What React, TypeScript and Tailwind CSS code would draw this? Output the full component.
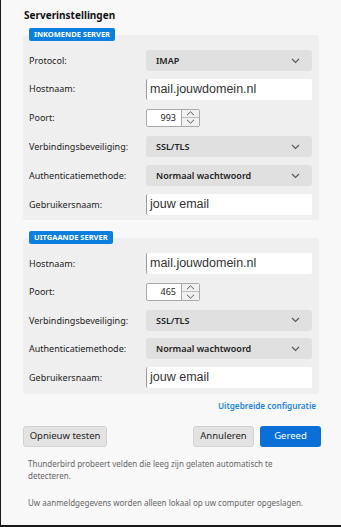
import React from "react";

const font = { fontFamily: '"Noto Sans", "Open Sans", sans-serif' };

function Chevron() {
  return (
    <svg width="9" height="6" viewBox="0 0 9 6" className="shrink-0">
      <path d="M1 1 L4.5 4.5 L8 1" fill="none" stroke="#555" strokeWidth="1.1" />
    </svg>
  );
}

function Select({ value }: { value: string }) {
  return (
    <div className="flex h-[21px] w-[166px] items-center justify-between rounded-[3px] bg-[#e0e0e0] pl-[10px] pr-[12px]">
      <span className="text-[9px] font-semibold text-[#222]">{value}</span>
      <Chevron />
    </div>
  );
}

function TextInput({ value }: { value: string }) {
  return (
    <div className="flex h-[21px] w-[166px] items-center rounded-[2px] border-l border-[#9a9a9a] bg-white pl-[3px]">
      <span
        className="text-[12.5px] text-[#333]"
        style={{ fontFamily: '"Liberation Sans", Arial, sans-serif' }}
      >
        {value}
      </span>
    </div>
  );
}

function Spin({ value }: { value: string }) {
  return (
    <div className="flex h-[18px] w-[54px] rounded-[2px] border border-[#a9a9a9] bg-white">
      <div className="flex flex-1 items-center justify-end pr-[5px] text-[9px] text-[#222]">{value}</div>
      <div className="flex w-[18px] flex-col border-l border-[#a9a9a9] bg-[#f0f0f0]">
        <div className="flex flex-1 items-center justify-center border-b border-[#bdbdbd]">
          <svg width="9" height="5" viewBox="0 0 9 5">
            <path d="M1 4.2 L4.5 0.8 L8 4.2" fill="none" stroke="#555" strokeWidth="1" />
          </svg>
        </div>
        <div className="flex flex-1 items-center justify-center">
          <svg width="9" height="5" viewBox="0 0 9 5">
            <path d="M1 0.8 L4.5 4.2 L8 0.8" fill="none" stroke="#555" strokeWidth="1" />
          </svg>
        </div>
      </div>
    </div>
  );
}

function Row({ label, children, h }: { label: string; children: React.ReactNode; h: string }) {
  return (
    <div className={`flex items-center ${h}`}>
      <div className="w-[117px] text-[9px] text-[#222]">{label}</div>
      {children}
    </div>
  );
}

function Section({ title, children, pb }: { title: string; children: React.ReactNode; pb: string }) {
  return (
    <div className="flex flex-col">
      <div className="relative z-10 ml-[6px] flex h-[13px] w-fit items-center rounded-[2px] bg-[#0b7fe0] px-[5px] text-[7.5px] font-bold text-white">
        {title}
      </div>
      <div className={`-mt-[6px] rounded-[3px] bg-[#efefef] pl-[6px] pt-[11px] ${pb}`}>{children}</div>
    </div>
  );
}

export default function App() {
  return (
    <div
      className="flex h-[527px] w-[341px] flex-col border-b-2 border-l border-[#1a1a1a] bg-[#f8f8f8] pl-[23px] pr-[20px]"
      style={font}
    >
      <div className="mt-[8px] text-[10px] font-bold text-[#111]">Serverinstellingen</div>
      <div className="-ml-[1px] mt-[5px] flex w-[296px] flex-col gap-[11px]">
        <Section title="INKOMENDE SERVER" pb="pb-[1px]">
          <Row label="Protocol:" h="h-[29px]"><Select value="IMAP" /></Row>
          <Row label="Hostnaam:" h="h-[28px]"><TextInput value="mail.jouwdomein.nl" /></Row>
          <Row label="Poort:" h="h-[29px]"><Spin value="993" /></Row>
          <Row label="Verbindingsbeveiliging:" h="h-[29px]"><Select value="SSL/TLS" /></Row>
          <Row label="Authenticatiemethode:" h="h-[29px]"><Select value="Normaal wachtwoord" /></Row>
          <Row label="Gebruikersnaam:" h="h-[29px]"><TextInput value="jouw email" /></Row>
        </Section>
        <Section title="UITGAANDE SERVER" pb="pb-[2px]">
          <Row label="Hostnaam:" h="h-[28.5px]"><TextInput value="mail.jouwdomein.nl" /></Row>
          <Row label="Poort:" h="h-[28.5px]"><Spin value="465" /></Row>
          <Row label="Verbindingsbeveiliging:" h="h-[28.5px]"><Select value="SSL/TLS" /></Row>
          <Row label="Authenticatiemethode:" h="h-[28.5px]"><Select value="Normaal wachtwoord" /></Row>
          <Row label="Gebruikersnaam:" h="h-[28.5px]"><TextInput value="jouw email" /></Row>
        </Section>
      </div>
      <div className="mt-[6px] flex justify-end pr-[5px]">
        <span className="text-[8.2px] font-semibold text-[#1a84e0]">Uitgebreide configuratie</span>
      </div>
      <div className="mt-[14px] flex items-center justify-between">
        <button className="h-[21px] w-[84px] -ml-[1px] rounded-[3px] border border-[#d2d2d2] bg-[#e3e3e3] text-[9.5px] text-[#222]">
          Opnieuw testen
        </button>
        <div className="flex gap-[6px]">
          <button className="h-[21px] w-[61px] rounded-[3px] border border-[#d2d2d2] bg-[#e3e3e3] text-[9.5px] text-[#222]">
            Annuleren
          </button>
          <button className="h-[21px] w-[61px] rounded-[3px] bg-[#0a6fd6] text-[9.5px] text-white">
            Gereed
          </button>
        </div>
      </div>
      <div className="mt-[11px] whitespace-nowrap pl-[4px] text-[8px] leading-[12px] text-[#666]">
        Thunderbird probeert velden die leeg zijn gelaten automatisch te
        <br />
        detecteren.
      </div>
      <div className="mt-[15px] whitespace-nowrap pl-[4px] text-[8px] leading-[12px] text-[#666]">
        Uw aanmeldgegevens worden alleen lokaal op uw computer opgeslagen.
      </div>
    </div>
  );
}
